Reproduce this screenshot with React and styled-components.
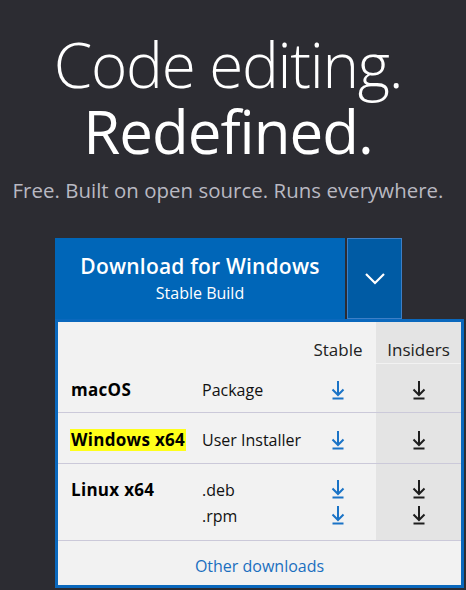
import React from 'react';
import styled, { createGlobalStyle } from 'styled-components';

const GlobalStyle = createGlobalStyle`
  html, body {
    margin: 0;
    padding: 0;
    background: #2c2c32;
  }
  body {
    font-family: "Open Sans", "Noto Sans", sans-serif;
  }
`;

const Page = styled.div`
  width: 466px;
  height: 590px;
  overflow: hidden;
  background: #2c2c32;
  color: #fff;
`;

const Hero = styled.header`
  display: flex;
  flex-direction: column;
  align-items: center;
  padding: 31px 10px 0 0;
`;

const Headline = styled.h1`
  margin: 0;
  font-size: ${p => p.$size}px;
  font-weight: ${p => p.$weight};
  line-height: ${p => p.$lh}px;
  letter-spacing: ${p => p.$ls}px;
  color: #fff;
  white-space: nowrap;
`;

const Tagline = styled.p`
  margin: 11px 0 0;
  font-size: 20.4px;
  line-height: 28px;
  letter-spacing: 0.05px;
  color: #b9b9c2;
  white-space: nowrap;
`;

const DownloadArea = styled.div`
  padding: 34px 0 0 55px;
  display: flex;
  flex-direction: column;
`;

const ButtonGroup = styled.div`
  display: flex;
  gap: 2px;
  height: 81px;
`;

const MainButton = styled.button`
  width: 290px;
  border: none;
  background: #0066b8;
  color: #fff;
  font-family: inherit;
  display: flex;
  flex-direction: column;
  align-items: center;
  justify-content: center;
  padding: 0 0 2px;
  cursor: pointer;
`;

const ButtonTitle = styled.span`
  font-size: 21px;
  font-weight: 600;
  line-height: 28px;
  letter-spacing: 0.2px;
`;

const ButtonSub = styled.span`
  font-size: 16px;
  line-height: 22px;
  margin-top: 2px;
`;

const Toggle = styled.button`
  width: 55px;
  box-sizing: border-box;
  border: 1px solid #3d7fc6;
  background: #005ba4;
  display: flex;
  align-items: center;
  justify-content: center;
  padding: 0;
  cursor: pointer;
`;

const Panel = styled.div`
  width: 409px;
  box-sizing: border-box;
  border: 3px solid #0a68bd;
  background: #f2f2f2;
  color: #111;
`;

const Row = styled.div`
  display: grid;
  grid-template-columns: 132px 110px 76px 1fr;
  height: ${p => p.$h}px;
  border-bottom: 1px solid ${p => (p.$line ? '#cbc9d9' : 'transparent')};
  box-sizing: border-box;
`;

const Cell = styled.div`
  display: flex;
  flex-direction: column;
  justify-content: ${p => p.$v || 'center'};
  align-items: ${p => p.$h || 'flex-start'};
  padding: ${p => p.$pad || '0'};
  gap: ${p => p.$gap || 0}px;
  font-size: 16px;
  line-height: 22px;
  white-space: nowrap;
  background: ${p => (p.$insiders ? '#e4e4e4' : 'transparent')};
`;

const HeadText = styled.span`
  font-size: 17px;
  line-height: 24px;
  color: #222;
`;

const OsName = styled.span`
  font-weight: 700;
  font-size: 17px;
  letter-spacing: 0.3px;
  color: #000;
  background: ${p => (p.$mark ? '#ffff1a' : 'transparent')};
  margin-left: ${p => (p.$mark ? '-1px' : 0)};
  padding: ${p => (p.$mark ? '0 1px' : 0)};
`;

const Footer = styled.div`
  height: 44px;
  display: flex;
  align-items: center;
  justify-content: center;
  padding-top: 5px;
  box-sizing: border-box;
`;

const Link = styled.a`
  color: #1a6fbf;
  font-size: 16px;
  text-decoration: none;
`;

function Chevron() {
  return (
    <svg width="22" height="14" viewBox="0 0 22 14">
      <path d="M2 2 L11 11 L20 2" fill="none" stroke="#fff" strokeWidth="2.2" />
    </svg>
  );
}

function Arrow({ color }) {
  return (
    <svg width="14" height="20" viewBox="0 0 14 20">
      <path d="M7 1 V15" stroke={color} strokeWidth="2" fill="none" />
      <path d="M1.5 9.5 L7 15 L12.5 9.5" stroke={color} strokeWidth="2" fill="none" />
      <path d="M1.5 18.5 H12.5" stroke={color} strokeWidth="2" fill="none" />
    </svg>
  );
}

const platforms = [
  { name: 'macOS', h: 49, files: ['Package'] },
  { name: 'Windows x64', h: 51, files: ['User Installer'], mark: true },
  { name: 'Linux x64', h: 77, files: ['.deb', '.rpm'] },
];

export default function App() {
  return (
    <Page>
      <GlobalStyle />
      <Hero>
        <Headline $size={62} $weight={300} $lh={67} $ls={-1.3}>Code editing.</Headline>
        <Headline $size={60} $weight={400} $lh={67} $ls={-1}>Redefined.</Headline>
        <Tagline>Free. Built on open source. Runs everywhere.</Tagline>
      </Hero>

      <DownloadArea>
        <ButtonGroup>
          <MainButton>
            <ButtonTitle>Download for Windows</ButtonTitle>
            <ButtonSub>Stable Build</ButtonSub>
          </MainButton>
          <Toggle aria-label="More downloads">
            <Chevron />
          </Toggle>
        </ButtonGroup>

        <Panel>
          <Row $h={42}>
            <Cell />
            <Cell />
            <Cell $v="flex-end" $h="center" $pad="0 0 1px">
              <HeadText>Stable</HeadText>
            </Cell>
            <Cell $v="flex-end" $h="center" $pad="0 0 1px" $insiders>
              <HeadText>Insiders</HeadText>
            </Cell>
          </Row>
          {platforms.map(p => {
            const multi = p.files.length > 1;
            const top = multi ? '15px' : '4px';
            return (
              <Row key={p.name} $h={p.h} $line>
                <Cell $pad={`${top} 0 0 13px`} $v={multi ? 'flex-start' : 'center'}>
                  <OsName $mark={p.mark}>{p.name}</OsName>
                </Cell>
                <Cell $pad={`${top} 0 0 12px`} $v={multi ? 'flex-start' : 'center'} $gap={4}>
                  {p.files.map(f => (
                    <span key={f}>{f}</span>
                  ))}
                </Cell>
                <Cell $pad={`${top} 0 0`} $v={multi ? 'flex-start' : 'center'} $h="center" $gap={6}>
                  {p.files.map(f => (
                    <Arrow key={f} color="#1a73c6" />
                  ))}
                </Cell>
                <Cell $pad={`${top} 0 0`} $v={multi ? 'flex-start' : 'center'} $h="center" $gap={6} $insiders>
                  {p.files.map(f => (
                    <Arrow key={f} color="#1e1e1e" />
                  ))}
                </Cell>
              </Row>
            );
          })}
          <Footer>
            <Link href="#">Other downloads</Link>
          </Footer>
        </Panel>
      </DownloadArea>
    </Page>
  );
}
